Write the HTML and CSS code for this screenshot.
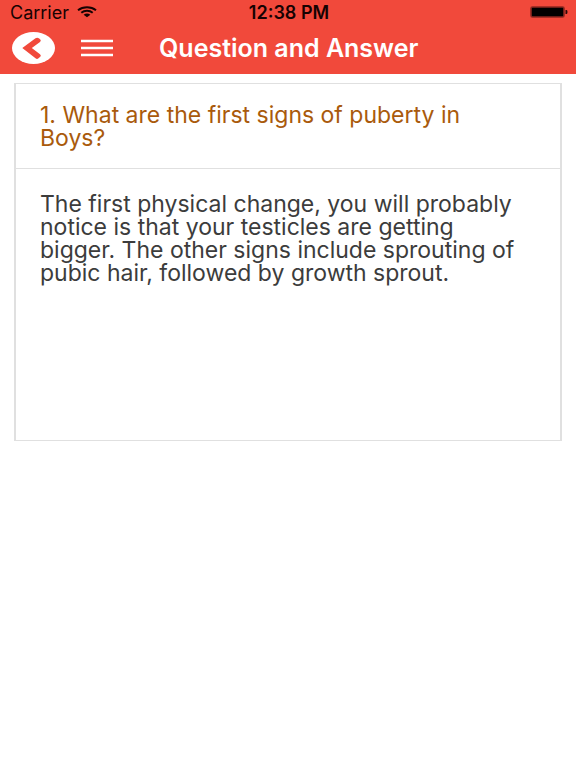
FILE: index.html
```html
<!DOCTYPE html>
<html lang="en">

<head>
  <meta charset="UTF-8">
  <meta name="viewport" content="width=device-width, initial-scale=1.0">
  <title>Question and Answer</title>
  <link rel="stylesheet" href="styles.css">
</head>

<body>

  <header class="app-header">
    <div class="status-bar">
      <div class="carrier">
        <span>Carrier</span>
        <svg class="wifi-icon" viewBox="0 0 20 12" fill="none" stroke="#160202" stroke-width="2">
          <path d="M1 4.200C6 .2 14 .2 19 4.200" />
          <path d="M4.300 6.800C7.500 4.200 12.500 4.200 15.700 6.800" />
          <path d="M6.600 8.700Q10 6.400 13.400 8.700L10 11.300Z" fill="#160202" stroke="none" />
        </svg>
      </div>
      <span class="time">12:38 PM</span>
      <svg class="battery-icon" viewBox="0 0 38 12">
        <rect x="1" y="1" width="33" height="10" rx="1.500" fill="#000" stroke="#8c2720" stroke-width="1.600" />
        <path d="M35.500 4h1q1 0 1 2t-1 2h-1z" fill="#2a0907" />
      </svg>
    </div>

    <div class="nav-bar">
      <button class="nav-btn" aria-label="Back">
        <svg class="back-icon" viewBox="0 0 43 32">
          <ellipse cx="21.500" cy="16" rx="21.500" ry="16" fill="#fff" />
          <path d="M10.300 16L23.500 6.200Q25.300 5 27.200 6.500L28.300 7.500Q29.500 8.800 28 10L19.800 16L28 22.200Q29.500 23.500 28.300 24.700L26.500 26.300Q25 27.500 23.500 26.300Z" fill="#f1493b" />
        </svg>
      </button>
      <button class="nav-btn" aria-label="Menu">
        <svg class="menu-icon" viewBox="0 0 32 18">
          <path d="M0 2h32M0 9h32M0 16h32" stroke="#fff" stroke-width="2.300" />
        </svg>
      </button>
      <h1 class="page-title">Question and Answer</h1>
    </div>
  </header>

  <main class="qa-card">
    <h2 class="question">1. What are the first signs of puberty in Boys?</h2>
    <p class="answer">The first physical change, you will probably notice is that your testicles are getting bigger. The other signs include sprouting of pubic hair, followed by growth sprout.</p>
  </main>

</body>

</html>
```
FILE: styles.css
```css
* {
  margin: 0;
  padding: 0;
  box-sizing: border-box;
}

body {
  background-color: #fff;
  font-family: Inter, "Liberation Sans", Arial, sans-serif;
}

svg {
  display: block;
}

/* Header */
.app-header {
  background-color: #f1493b;
}

.status-bar {
  display: grid;
  grid-template-columns: 1fr auto 1fr;
  align-items: center;
  height: 24px;
  padding: 0 8px 0 10px;
  font-size: 18px;
  color: #160202;
}

.carrier {
  display: flex;
  align-items: center;
  gap: 8px;
}

.wifi-icon {
  width: 20px;
  height: 12px;
}

.time {
  font-weight: 600;
}

.battery-icon {
  width: 38px;
  height: 12px;
  justify-self: end;
}

.nav-bar {
  display: flex;
  align-items: center;
  height: 50px;
  padding: 0 12px 2px;
}

.nav-btn {
  margin-right: 26px;
  background: none;
  border: none;
  cursor: pointer;
}

.back-icon {
  width: 43px;
  height: 32px;
}

.menu-icon {
  width: 32px;
  height: 18px;
}

.page-title {
  flex: 1;
  padding-left: 20px;
  font-size: 25px;
  font-weight: 600;
  color: #fff;
}

/* Question and answer */
.qa-card {
  min-height: 358px;
  margin: 9px 14px;
  border: 2px solid #e0e0e0;
  border-width: 1px 2px;
  font-size: 23px;
  line-height: 23px;
}

.question {
  padding: 20px 36px 18px 24px;
  border-bottom: 1px solid #e0e0e0;
  font-size: 23px;
  font-weight: normal;
  color: #a95a0c;
}

.answer {
  padding: 24px 36px 24px 24px;
  color: #3c3c3c;
}
```
